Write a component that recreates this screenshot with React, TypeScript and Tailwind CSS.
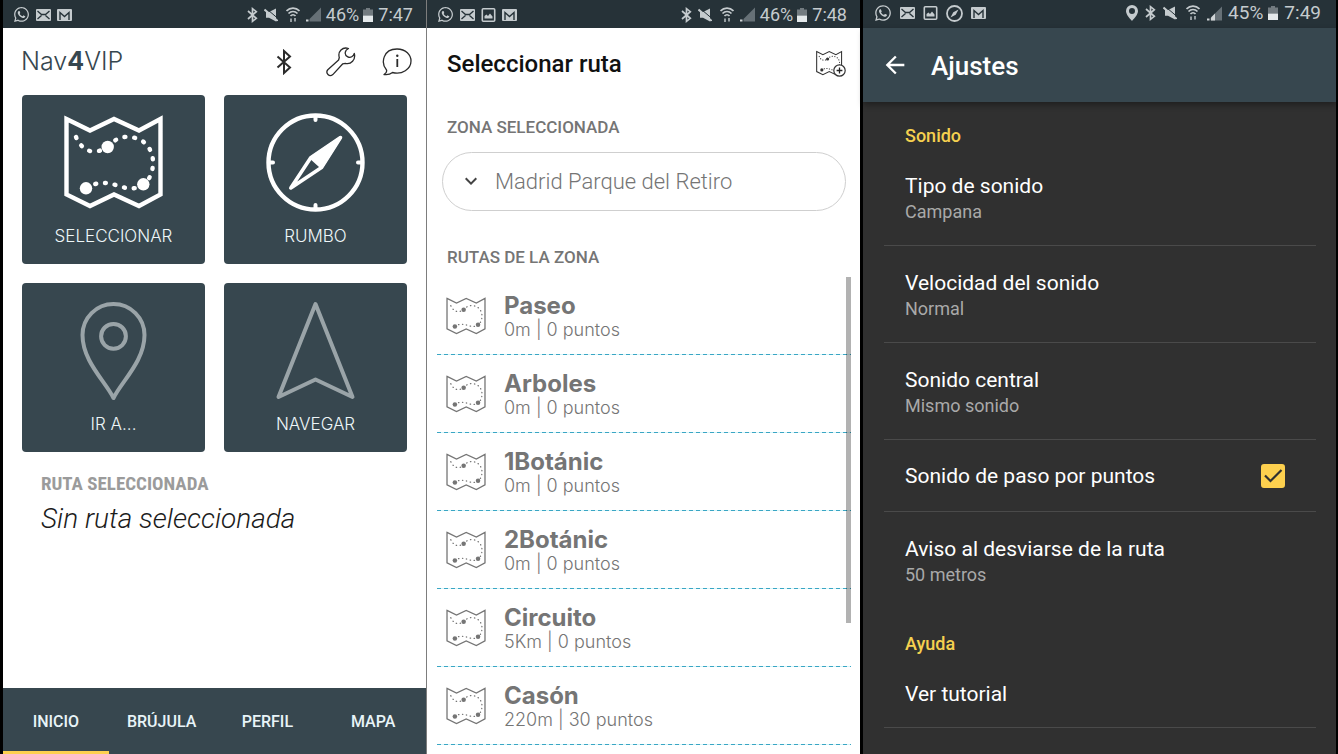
import React, { useState } from 'react';
import { FaWhatsapp } from 'react-icons/fa';
import { MdArrowBack, MdKeyboardArrowDown } from 'react-icons/md';

interface IconProps {
    className?: string;
}

const MAP_OUTLINE = 'M2.5 6 L26 17.5 L50 6 L75 17.5 L96.5 6 V81.5 L75 93 L50 81.5 L26 93 L2.5 81.5 Z';
const MAP_TRAIL_TOP = 'M12 24 C16 33 22 38.5 30 38.5 C40 38.5 46 31 51 27.5 C57 23 66 23 73 25.5 C84 29 89 40 89 49 C89 57 87 66 79.5 71';
const MAP_TRAIL_BOTTOM = 'M79.5 71 C74 76 66 76 60.7 74.7 C52 72 45 70 41.3 70 C35 70 27 71 22 75';

const MapShapes: React.FC<{ line: number; dot: number }> = ({ line, dot }) => (
    <g fill="none" stroke="currentColor" strokeWidth={line} strokeLinejoin="round" strokeLinecap="round">
        <path d={MAP_OUTLINE} strokeLinejoin="miter" />
        <path d={MAP_TRAIL_TOP} strokeDasharray="1 8.8" />
        <path d={MAP_TRAIL_BOTTOM} strokeDasharray="1 8.8" />
        <g fill="currentColor" stroke="none">
            <circle cx="43.7" cy="34" r={dot} />
            <circle cx="22" cy="75.3" r={dot} />
            <circle cx="79.3" cy="71.3" r={dot} />
        </g>
    </g>
);

const MapTileIcon: React.FC<IconProps> = ({ className }) => (
    <svg viewBox="0 0 99 99" className={className} aria-hidden="true">
        <MapShapes line={4.4} dot={6.2} />
    </svg>
);

const MapRowIcon: React.FC<IconProps> = ({ className }) => (
    <svg viewBox="0 0 99 99" className={className} aria-hidden="true">
        <MapShapes line={3.2} dot={5.6} />
    </svg>
);

const MapAddIcon: React.FC<IconProps> = ({ className }) => (
    <svg viewBox="0 0 30 28" className={className} aria-hidden="true">
        <g transform="scale(0.265)">
            <MapShapes line={4} dot={6} />
        </g>
        <circle cx="23.5" cy="20.5" r="5.7" fill="#fff" stroke="#333" strokeWidth="1.2" />
        <path d="M23.5 17.6 V23.4 M20.6 20.5 H26.4" stroke="#222" strokeWidth="1.3" />
    </svg>
);

const CompassIcon: React.FC<IconProps> = ({ className }) => (
    <svg viewBox="0 0 99 99" className={className} fill="none" stroke="currentColor" strokeWidth="4" strokeLinecap="round" strokeLinejoin="round" aria-hidden="true">
        <circle cx="49.5" cy="49.5" r="47" strokeWidth="4.4" />
        <path d="M49.5 4 V7 M49.5 92 V95 M4 49.5 H7 M92 49.5 H95" />
        <path d="M74.5 24.5 L44.7 44.7 L24.8 75 L55.5 54.5 Z" strokeWidth="3.6" />
        <path d="M74.5 24.5 L44.7 44.7 L55.5 54.5 Z" fill="currentColor" strokeWidth="2.5" />
    </svg>
);

const PinIcon: React.FC<IconProps> = ({ className }) => (
    <svg viewBox="0 0 99 99" className={className} fill="none" stroke="currentColor" strokeWidth="4" strokeLinejoin="round" aria-hidden="true">
        <path d="M49.5 97 C41 80 18.5 60 18.5 34 A31 31 0 0 1 80.5 34 C80.5 60 58 80 49.5 97 Z" />
        <circle cx="49.5" cy="35.3" r="12.4" />
    </svg>
);

const ArrowIcon: React.FC<IconProps> = ({ className }) => (
    <svg viewBox="0 0 99 99" className={className} fill="none" stroke="currentColor" strokeWidth="4" strokeLinejoin="round" aria-hidden="true">
        <path d="M49.5 3 L86.5 96 L49.5 78.5 L12.5 96 Z" />
    </svg>
);

const BluetoothIcon: React.FC<IconProps> = ({ className }) => (
    <svg viewBox="0 0 16 26" className={className} fill="none" stroke="currentColor" strokeWidth="2" aria-hidden="true">
        <path d="M1.5 7.5 L14 18.5 L8 24 V2 L14 7.5 L1.5 18.5" />
    </svg>
);

const WrenchIcon: React.FC<IconProps> = ({ className }) => (
    <svg viewBox="0 0 30 30" className={className} fill="none" stroke="currentColor" strokeWidth="1.3" strokeLinejoin="round" aria-hidden="true">
        <path d="M22.5 1.5 C16.5 -.5 11.5 4.5 13.3 10.5 L12.6 13 L1.8 22.8 C-.8 25.8 3.2 30.6 6.8 27.6 L16.8 16.8 L19.3 16.3 C25 17.8 30 12.5 28.3 6.3 C27.5 9.5 24.5 11.2 21.8 9.8 C18 8 18.5 3.5 22.5 1.5 Z" />
    </svg>
);

const InfoIcon: React.FC<IconProps> = ({ className }) => (
    <svg viewBox="0 0 30 28" className={className} fill="none" stroke="currentColor" strokeWidth="1.3" strokeLinejoin="round" aria-hidden="true">
        <path d="M2 26.5 C4.5 25 5 23.5 4.5 22 C-1.5 15 1 1 15 1 C24 1 29 7 29 13 C29 21 20 27 10.5 24.5 C8 26.5 5 27 2 26.5 Z" />
        <path d="M15.3 11 V19" strokeWidth="1.8" />
        <circle cx="15.3" cy="7.8" r="1.2" fill="currentColor" stroke="none" />
    </svg>
);

// status bar glyphs
const MailGlyph: React.FC<IconProps> = ({ className }) => (
    <svg viewBox="0 0 15 12" className={className} aria-hidden="true">
        <rect width="15" height="12" rx="1" fill="currentColor" />
        <path d="M1.5 2 L5.5 5.5 H9.5 L13.5 2 M1.5 10 L5.5 6.5 M13.5 10 L9.5 6.5" stroke="#263238" strokeWidth="1.3" fill="none" />
    </svg>
);

const GmailGlyph: React.FC<IconProps> = ({ className }) => (
    <svg viewBox="0 0 15 12" className={className} aria-hidden="true">
        <rect width="15" height="12" rx="1" fill="currentColor" />
        <path d="M3 11 V3.5 L7.5 7.5 L12 3.5 V11" stroke="#263238" strokeWidth="1.4" fill="none" />
    </svg>
);

const ImageGlyph: React.FC<IconProps> = ({ className }) => (
    <svg viewBox="0 0 14 14" className={className} aria-hidden="true">
        <rect x=".8" y=".8" width="12.4" height="12.4" rx="1" fill="none" stroke="currentColor" strokeWidth="1.6" />
        <path d="M3 10.5 V8 L5 6.5 L6.5 8 L8.5 5.5 L11 8.5 V10.5 Z" fill="currentColor" />
    </svg>
);

const CompassGlyph: React.FC<IconProps> = ({ className }) => (
    <svg viewBox="0 0 17 17" className={className} aria-hidden="true">
        <circle cx="8.5" cy="8.5" r="7.5" fill="none" stroke="currentColor" strokeWidth="1.8" />
        <path d="M12.5 4.5 L7.3 7.3 L4.5 12.5 L9.7 9.7 Z" fill="currentColor" />
    </svg>
);

const LocationGlyph: React.FC<IconProps> = ({ className }) => (
    <svg viewBox="0 0 12 16" className={className} aria-hidden="true">
        <path d="M6 0 A6 6 0 0 1 12 6 C12 9.5 8.5 13 6 16 C3.5 13 0 9.5 0 6 A6 6 0 0 1 6 0 Z M6 3 A3 3 0 1 0 6 9 A3 3 0 1 0 6 3 Z" fill="currentColor" fillRule="evenodd" />
    </svg>
);

const BluetoothGlyph: React.FC<IconProps> = ({ className }) => (
    <svg viewBox="0 0 11 16" className={className} fill="none" stroke="currentColor" strokeWidth="1.7" aria-hidden="true">
        <path d="M1 4 L9.3 11.3 L5.5 14.3 V1.7 L9.3 4.7 L1 12" />
    </svg>
);

const MuteGlyph: React.FC<IconProps> = ({ className }) => (
    <svg viewBox="0 0 14 14" className={className} aria-hidden="true">
        <path d="M2 4 H5 L12 .5 V13.5 L5 9.8 H2 Z" fill="currentColor" />
        <path d="M2 .3 L14 10.5" stroke="#263238" strokeWidth="1" />
        <path d="M.5 1.5 L13.5 12.8" stroke="currentColor" strokeWidth="2" />
    </svg>
);

const WifiGlyph: React.FC<IconProps> = ({ className }) => (
    <svg viewBox="0 0 14 16" className={className} fill="none" stroke="currentColor" strokeWidth="1.7" aria-hidden="true">
        <path d="M.5 4 C4 .2 10 .2 13.5 4 M2.5 6.5 C5 3.8 9 3.8 11.5 6.5 M4.5 9 C6 7.3 8 7.3 9.5 9" />
        <path d="M5 15 V11.5 M9 11 V14.5" strokeWidth="2" opacity=".7" />
    </svg>
);

const SignalGlyph: React.FC<{ bars: number }> = ({ bars }) => (
    <svg viewBox="0 0 15 15" className="w-[15px] h-[15px]" aria-hidden="true">
        <path d="M15 .5 V14.5 H3.5 V12 Z" fill="#667076" />
        {bars > 1 && <path d="M4 11.5 L8 7.5 V14.5 H4 Z" fill="#cfd4d6" />}
        <rect y="12.5" width="2.5" height="2" fill="#cfd4d6" />
    </svg>
);

const BatteryGlyph: React.FC<IconProps> = ({ className }) => (
    <svg viewBox="0 0 10 14" className={className} aria-hidden="true">
        <path d="M3 0 H7 V1.5 H10 V7.5 H0 V1.5 H3 Z" fill="#727b80" />
        <rect y="7.5" width="10" height="6.5" fill="#e4e9eb" />
    </svg>
);

interface StatusBarProps {
    time: string;
    battery: string;
    large?: boolean;
    picture?: boolean;
    location?: boolean;
}

const StatusBar: React.FC<StatusBarProps> = ({ time, battery, large, picture, location }) => (
    <div className={`h-7 flex-shrink-0 bg-[#263238] text-[#c5cbce] flex items-center justify-between ${large ? 'pl-[11px] pr-[15px] pb-[2px] text-[19px]' : 'pl-[10px] pr-[13px] pt-px text-lg'} leading-6`}>
        <div className={`flex items-center ${large ? 'gap-2' : 'gap-[6px]'}`}>
            <FaWhatsapp className={large ? 'w-[18px] h-[18px]' : 'w-[17px] h-[17px]'} />
            <MailGlyph className="w-[15px] h-3" />
            {picture && <ImageGlyph className="w-[15px] h-[14px]" />}
            {large && <CompassGlyph className="w-[17px] h-[17px]" />}
            <GmailGlyph className="w-[15px] h-3" />
        </div>
        <div className={`flex items-center ${large ? 'gap-[5px]' : 'gap-1'}`}>
            {location && <LocationGlyph className="w-3 h-4 mr-0.5" />}
            <BluetoothGlyph className="w-[11px] h-4 mr-0.5" />
            <MuteGlyph className="w-[14px] h-[14px]" />
            <WifiGlyph className="w-[14px] h-4 ml-1 mr-0.5" />
            <SignalGlyph bars={large ? 2 : 1} />
            <span className="ml-px">{battery}</span>
            <BatteryGlyph className="w-[10px] h-[14px]" />
            <span className="ml-px">{time}</span>
        </div>
    </div>
);

const tiles = [
    { label: 'SELECCIONAR', Icon: MapTileIcon, dimmed: false },
    { label: 'RUMBO', Icon: CompassIcon, dimmed: false },
    { label: 'IR A...', Icon: PinIcon, dimmed: true },
    { label: 'NAVEGAR', Icon: ArrowIcon, dimmed: true },
];

const tabs = ['INICIO', 'BRÚJULA', 'PERFIL', 'MAPA'];

const HomeScreen: React.FC = () => {
    const [activeTab, setActiveTab] = useState('INICIO');

    return (
        <section className="flex-[423] min-w-0 flex flex-col bg-white border-r border-[#7d7d7d]">
            <StatusBar time="7:47" battery="46%" />
            <header className="h-[67px] pl-[18px] pr-[14px] flex items-center justify-between">
                <h1 className="font-['Inter',sans-serif] font-light text-[25px] text-[#37474f]">
                    Nav<b className="font-bold">4</b>VIP
                </h1>
                <div className="flex items-center text-[#2b2b2b]">
                    <button type="button" aria-label="Bluetooth">
                        <BluetoothIcon className="w-4 h-[26px]" />
                    </button>
                    <button type="button" className="ml-[34px]" aria-label="Ajustes">
                        <WrenchIcon className="w-[30px] h-[30px]" />
                    </button>
                    <button type="button" className="ml-[26px]" aria-label="Información">
                        <InfoIcon className="w-[30px] h-7" />
                    </button>
                </div>
            </header>
            <div className="grid grid-cols-2 gap-[19px] px-[19px]">
                {tiles.map(({ label, Icon, dimmed }) => (
                    <button key={label} type="button" className="h-[169px] pt-[18px] rounded-sm bg-[#37474f] flex flex-col items-center">
                        <Icon className={`w-[99px] h-[99px] ${dimmed ? 'text-[#9aa4a8]' : 'text-white'}`} />
                        <span className="mt-3 leading-6 font-['Inter',sans-serif] font-light text-[17px] text-[#eef6f8]">{label}</span>
                    </button>
                ))}
            </div>
            <div className="px-[38px] pt-5">
                <h2 className="font-['Roboto_Condensed',Roboto,sans-serif] font-bold text-[19px] leading-6 text-[#9b9b9b]">RUTA SELECCIONADA</h2>
                <p className="mt-[5px] font-light italic text-[28px] leading-9 text-[#1c1c1c]">Sin ruta seleccionada</p>
            </div>
            <nav className="mt-auto h-[66px] bg-[#37474f] grid grid-cols-4">
                {tabs.map((tab) => (
                    <a
                        key={tab}
                        href="#"
                        onClick={(e) => { e.preventDefault(); setActiveTab(tab); }}
                        className={`flex items-center justify-center pt-1 border-b-[3px] font-medium text-base text-[#e8f4f8] ${activeTab === tab ? 'border-[#fdd04e]' : 'border-transparent'}`}>
                        {tab}
                    </a>
                ))}
            </nav>
        </section>
    );
};

const routes = [
    { name: 'Paseo', info: '0m | 0 puntos' },
    { name: 'Arboles', info: '0m | 0 puntos' },
    { name: '1Botánic', info: '0m | 0 puntos' },
    { name: '2Botánic', info: '0m | 0 puntos' },
    { name: 'Circuito', info: '5Km | 0 puntos' },
    { name: 'Casón', info: '220m | 30 puntos' },
];

const RoutesScreen: React.FC = () => (
    <section className="flex-[433] min-w-0 flex flex-col bg-white border-r-[3px] border-black">
        <StatusBar time="7:48" battery="46%" picture />
        <header className="h-[71px] pl-5 pr-[14px] flex items-center justify-between">
            <h1 className="font-medium text-2xl text-[#111]">Seleccionar ruta</h1>
            <button type="button" className="text-[#333]" aria-label="Añadir ruta">
                <MapAddIcon className="w-[30px] h-7" />
            </button>
        </header>
        <label htmlFor="zona" className="block px-5 pt-4 font-medium text-[17px] leading-6 text-[#757575]">ZONA SELECCIONADA</label>
        <div className="relative mt-[13px] ml-[15px] mr-[14px]">
            <select id="zona" className="appearance-none w-full h-[59px] pl-[52px] pr-6 rounded-full border border-[#cfcfcf] bg-transparent font-light text-[22px] text-[#757575]">
                <option>Madrid Parque del Retiro</option>
            </select>
            <MdKeyboardArrowDown className="absolute left-[17px] top-[17px] w-6 h-6 text-[#444] pointer-events-none" />
        </div>
        <h2 className="px-5 pt-[34px] font-medium text-[17px] leading-6 text-[#757575]">RUTAS DE LA ZONA</h2>
        <div className="relative mt-2 ml-[10px] mr-[9px]">
            <ul>
                {routes.map((route) => (
                    <li key={route.name}>
                        <button type="button" className="w-full h-[77px] pl-[9px] flex items-center text-left text-[#757575]">
                            <MapRowIcon className="w-10 h-10 flex-shrink-0" />
                            <span className="ml-[18px] font-['Inter',sans-serif]">
                                <span className="block pt-1 font-bold text-2xl leading-6">{route.name}</span>
                                <span className="block font-light text-lg leading-6">{route.info}</span>
                            </span>
                        </button>
                        <div className="h-px bg-[repeating-linear-gradient(90deg,#3aa6c4_0_4px,#d5f5fa_4px_7px)]" />
                    </li>
                ))}
            </ul>
            <div className="absolute right-0 top-0 w-[5px] h-[346px] bg-black/30" />
        </div>
    </section>
);

const SettingsCategory: React.FC<{ children: React.ReactNode }> = ({ children }) => (
    <h2 className="h-12 pl-[42px] pt-[23px] font-medium text-lg leading-6 text-[#f5d04f]">{children}</h2>
);

interface SettingsItemProps {
    title: string;
    value?: string;
    last?: boolean;
}

const SettingsItem: React.FC<SettingsItemProps> = ({ title, value, last }) => (
    <button type="button" className={`block ml-[21px] mr-5 pl-[21px] pt-6 pb-5 text-left border-b ${last ? 'border-transparent' : 'border-[#4a4a4a]'}`}>
        <span className="block text-[21px] leading-[26px] text-white">{title}</span>
        {value && <span className="block text-lg leading-[26px] text-[#a9a9a9]">{value}</span>}
    </button>
);

const SettingsScreen: React.FC = () => {
    const [waypointSound, setWaypointSound] = useState(true);

    return (
        <section className="flex-[473] min-w-0 flex flex-col bg-[#303030]">
            <StatusBar time="7:49" battery="45%" large picture location />
            <header className="h-[74px] -mb-px pl-[18px] pb-px flex items-center bg-[#37474f] shadow-[0_3px_6px_rgba(0,0,0,0.35)]">
                <button type="button" className="text-white" aria-label="Volver">
                    <MdArrowBack className="w-7 h-7" />
                </button>
                <h1 className="ml-[22px] pt-1 font-medium text-[26px] text-white">Ajustes</h1>
            </header>
            <SettingsCategory>Sonido</SettingsCategory>
            <SettingsItem title="Tipo de sonido" value="Campana" />
            <SettingsItem title="Velocidad del sonido" value="Normal" />
            <SettingsItem title="Sonido central" value="Mismo sonido" />
            <div className="ml-[21px] mr-5 pl-[21px] pr-[31px] pt-[23px] pb-[22px] flex items-center justify-between border-b border-[#4a4a4a]">
                <label htmlFor="paso" className="text-[21px] leading-[26px] text-white">Sonido de paso por puntos</label>
                <span className="relative w-6 h-6">
                    <input
                        id="paso"
                        type="checkbox"
                        checked={waypointSound}
                        onChange={(e) => setWaypointSound(e.target.checked)}
                        className="block appearance-none w-6 h-6 rounded-[3px] border-2 border-[#fdd04e] checked:bg-[#fdd04e]"
                    />
                    {waypointSound && (
                        <svg viewBox="0 0 24 24" className="absolute inset-0 w-6 h-6 pointer-events-none" fill="none" stroke="#303030" strokeWidth="2.2" aria-hidden="true">
                            <path d="M4 11.5 L9.5 17 L20.5 6" />
                        </svg>
                    )}
                </span>
            </div>
            <SettingsItem title="Aviso al desviarse de la ruta" value="50 metros" last />
            <SettingsCategory>Ayuda</SettingsCategory>
            <SettingsItem title="Ver tutorial" />
        </section>
    );
};

const App: React.FC = () => {
    return (
        <main className="min-h-screen flex bg-black pl-[3px] pr-[2px] font-['Roboto',sans-serif]">
            <HomeScreen />
            <RoutesScreen />
            <SettingsScreen />
        </main>
    );
};

export default App;
